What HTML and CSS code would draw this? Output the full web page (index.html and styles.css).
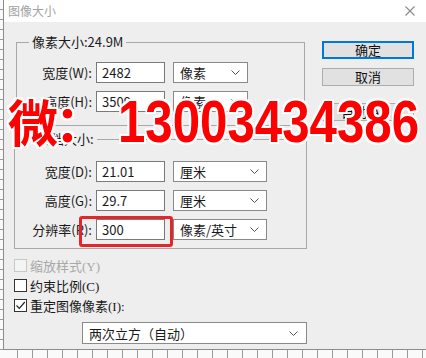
FILE: index.html
```html
<!DOCTYPE html>
<html lang="zh-CN">
<head>
  <meta charset="UTF-8">
  <title>图像大小</title>
  <link rel="stylesheet" href="styles.css">
</head>
<body>
  <div class="screen">
    <div class="dialog">
      <div class="titlebar">
        <span class="title">图像大小</span>
        <svg class="close" width="10" height="10" viewBox="0 0 10 10"><path d="M0.5 0.5 L9.5 9.5 M9.5 0.5 L0.5 9.5" stroke="#8a8a8a" stroke-width="1.1" fill="none"/></svg>
      </div>

      <div class="content">
        <div class="main">
          <fieldset class="group pixels">
            <legend>像素大小:24.9M</legend>
            <div class="row">
              <span class="label">宽度(W):</span>
              <span class="field">2482</span>
              <span class="select">像素<svg class="chev" width="9" height="5" viewBox="0 0 9 5"><path d="M0.5 0.5 L4.5 4.5 L8.5 0.5" stroke="#555" fill="none"/></svg></span>
            </div>
            <div class="row">
              <span class="label">高度(H):</span>
              <span class="field">3509</span>
              <span class="select">像素<svg class="chev" width="9" height="5" viewBox="0 0 9 5"><path d="M0.5 0.5 L4.5 4.5 L8.5 0.5" stroke="#555" fill="none"/></svg></span>
            </div>
          </fieldset>

          <fieldset class="group doc">
            <legend>文档大小:</legend>
            <div class="row">
              <span class="label">宽度(D):</span>
              <span class="field">21.01</span>
              <span class="select">厘米<svg class="chev" width="9" height="5" viewBox="0 0 9 5"><path d="M0.5 0.5 L4.5 4.5 L8.5 0.5" stroke="#555" fill="none"/></svg></span>
            </div>
            <div class="row">
              <span class="label">高度(G):</span>
              <span class="field">29.7</span>
              <span class="select">厘米<svg class="chev" width="9" height="5" viewBox="0 0 9 5"><path d="M0.5 0.5 L4.5 4.5 L8.5 0.5" stroke="#555" fill="none"/></svg></span>
            </div>
            <div class="row">
              <span class="label">分辨率(R):</span>
              <span class="field">300</span>
              <span class="select">像素/英寸<svg class="chev" width="9" height="5" viewBox="0 0 9 5"><path d="M0.5 0.5 L4.5 4.5 L8.5 0.5" stroke="#555" fill="none"/></svg></span>
            </div>
          </fieldset>

          <div class="checks">
            <div class="check disabled"><span class="box"></span>缩放样式(Y)</div>
            <div class="check"><span class="box"></span>约束比例(C)</div>
            <div class="check"><span class="box"><svg width="11" height="11" viewBox="0 0 11 11"><path d="M1.5 5.5 L4.3 8.3 L9.8 2" stroke="#222" stroke-width="1.2" fill="none"/></svg></span>重定图像像素(I):</div>
          </div>

          <div class="select wide">两次立方（自动）<svg class="chev" width="9" height="5" viewBox="0 0 9 5"><path d="M0.5 0.5 L4.5 4.5 L8.5 0.5" stroke="#555" fill="none"/></svg></div>
        </div>

        <div class="actions">
          <button class="btn default">确定</button>
          <button class="btn">取消</button>
          <button class="btn auto">自动(A)...</button>
        </div>
      </div>
    </div>
    <div class="ruler"></div>

    <div class="highlight"></div>
    <div class="watermark"><span class="wx">微</span><span class="colon">：</span><span class="num">13003434386</span></div>
  </div>
</body>
</html>
```

FILE: styles.css
```css
body {
  margin: 0;
  font-family: "Noto Sans CJK SC", sans-serif;
  font-size: 13px;
  color: #1a1a1a;
  background-color: #fafafa;
}
.screen {
  position: relative;
  width: 426px;
  height: 358px;
  overflow: hidden;
  background-image: repeating-linear-gradient(to bottom, transparent 0 9px, #9a9a9a 9px 10px);
  background-size: 3px 100%;
  background-repeat: no-repeat;
}
.dialog {
  margin-left: 3px;
  height: 350px;
  box-sizing: border-box;
  border-left: 1px solid #8c8c8c;
  border-bottom: 1px solid #8c8c8c;
  background-color: #eeeeee;
}
.titlebar {
  height: 22px;
  background-color: #fff;
  display: flex;
  align-items: center;
  justify-content: space-between;
  padding: 0 11px 0 4px;
}
.title {
  font-size: 12px;
  color: #a3a3a3;
  line-height: 14px;
}
.content {
  display: flex;
  justify-content: space-between;
  padding-right: 12px;
}
.main {
  display: flex;
  flex-direction: column;
  align-items: flex-start;
}
.group {
  box-sizing: border-box;
  margin: 0;
  border: 1px solid #a8a8a8;
  padding: 0;
}
.group legend {
  line-height: 16px;
  padding: 0 3px;
  margin-left: 12px;
}
.pixels {
  width: 289px;
  margin: 12px 0 0 12px;
  padding: 12px 0 13px;
}
.doc {
  width: 293px;
  margin: 5px 0 0 10px;
  padding: 14px 0 8px;
}
.doc legend {
  margin-left: 20px;
}
.row {
  display: flex;
  align-items: center;
  height: 21px;
  margin-bottom: 8px;
}
.row:last-child {
  margin-bottom: 0;
}
.label {
  width: 75px;
  text-align: right;
  line-height: 16px;
  margin-right: 4px;
}
.doc .label {
  width: 77px;
}
.field {
  box-sizing: border-box;
  width: 69px;
  height: 21px;
  border: 1px solid #7a7a7a;
  background-color: #fff;
  padding-left: 5px;
  line-height: 19px;
  margin-right: 8px;
}
.select {
  box-sizing: border-box;
  width: 75px;
  height: 21px;
  border: 1px solid #8a8a8a;
  background-color: #fff;
  padding: 0 7px 0 6px;
  line-height: 19px;
  display: flex;
  align-items: center;
  justify-content: space-between;
}
.doc .select {
  width: 94px;
}
.select.wide {
  width: 225px;
  height: 22px;
  margin: 7px 0 0 78px;
  padding-right: 8px;
}
.checks {
  margin: 6px 0 0 10px;
}
.check {
  display: flex;
  align-items: center;
  height: 20px;
  font-family: "Liberation Serif", "Noto Sans CJK SC", serif;
  font-size: 13px;
}
.box {
  box-sizing: border-box;
  width: 13px;
  height: 13px;
  border: 1px solid #333;
  background-color: #fff;
  margin-right: 3px;
  display: flex;
  align-items: center;
  justify-content: center;
}
.disabled {
  color: #a8a8a8;
}
.disabled .box {
  border-color: #c8c8c8;
  background-color: #f4f4f4;
}
.actions {
  display: flex;
  flex-direction: column;
  padding-top: 19px;
}
.btn {
  width: 92px;
  height: 18px;
  box-sizing: border-box;
  border: 1px solid #adadad;
  background-color: #e1e1e1;
  font-family: "Noto Sans CJK SC", sans-serif;
  font-size: 13px;
  line-height: 14px;
  padding: 0;
  color: #111;
  margin-bottom: 9px;
}
.btn.default {
  border: 2px solid #0078d7;
}
.btn.auto {
  margin-top: 8px;
}
.ruler {
  height: 8px;
  margin-left: 3px;
  background-image: repeating-linear-gradient(to right, transparent 0 14px, #9a9a9a 14px 15px);
}
.highlight {
  position: absolute;
  left: 79px;
  top: 216px;
  width: 94px;
  height: 31px;
  box-sizing: border-box;
  border: 3px solid #e4262b;
  border-radius: 3px;
}
.watermark {
  position: absolute;
  left: 8px;
  top: 90px;
  display: flex;
  align-items: baseline;
  color: #ff0000;
  font-weight: bold;
  text-shadow: 2px 0 #fff, -2px 0 #fff, 0 2px #fff, 0 -2px #fff, 2px 2px #fff, -2px -2px #fff, 2px -2px #fff, -2px 2px #fff;
}
.wx {
  font-family: "Noto Sans CJK SC", sans-serif;
  font-size: 50px;
  line-height: 60px;
}
.colon {
  font-family: "Noto Sans CJK SC", sans-serif;
  font-size: 50px;
  line-height: 60px;
  width: 63px;
  margin-left: -3px;
}
.num {
  display: inline-block;
  font-family: "Liberation Sans", sans-serif;
  font-size: 60px;
  line-height: 60px;
  transform: scaleX(0.82);
  transform-origin: left;
}
```
